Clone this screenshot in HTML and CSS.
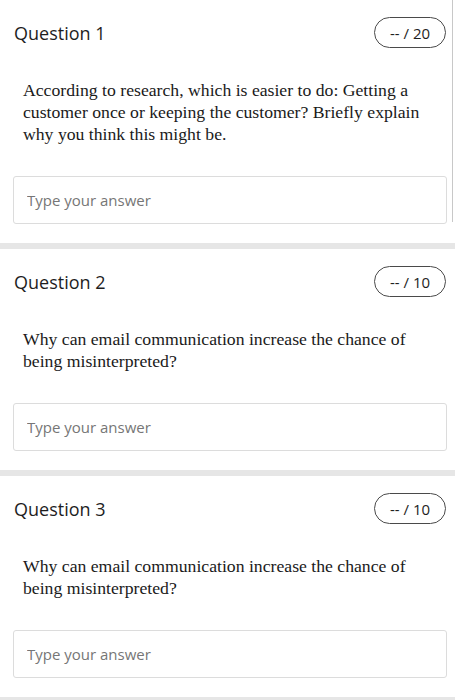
FILE: index.html
```html
<!DOCTYPE html>
<html lang="en">
<head>
    <meta charset="UTF-8">
    <meta name="viewport" content="width=device-width, initial-scale=1.0">
    <title>Quiz</title>
    <link rel="stylesheet" href="styles.css">
</head>
<body>
    <div class="quiz">
        <div class="scroll-edge"></div>

        <div class="question">
            <div class="question-head">
                <h2>Question 1</h2>
                <span class="points">-- / 20</span>
            </div>
            <p class="question-text">According to research, which is easier to do: Getting a customer once or keeping the customer? Briefly explain why you think this might be.</p>
            <input class="answer" type="text" placeholder="Type your answer">
        </div>

        <div class="question">
            <div class="question-head">
                <h2>Question 2</h2>
                <span class="points">-- / 10</span>
            </div>
            <p class="question-text">Why can email communication increase the chance of being misinterpreted?</p>
            <input class="answer" type="text" placeholder="Type your answer">
        </div>

        <div class="question">
            <div class="question-head">
                <h2>Question 3</h2>
                <span class="points">-- / 10</span>
            </div>
            <p class="question-text">Why can email communication increase the chance of being misinterpreted?</p>
            <input class="answer" type="text" placeholder="Type your answer">
        </div>
    </div>
</body>
</html>
```

FILE: styles.css
```css
* {
    margin: 0;
    padding: 0;
    box-sizing: border-box;
}

body {
    background-color: #fff;
    color: #222;
    font-family: "Open Sans", sans-serif;
}

.quiz {
    position: relative;
}

/* thin scrollbar edge on the right */
.scroll-edge {
    position: absolute;
    left: 452px;
    top: 0;
    width: 1px;
    height: 222px;
    background-color: #c8c8c8;
}

.question {
    padding: 17px 8px 19px 13px;
    border-bottom: 6px solid #e6e6e6;
}

.question-head {
    display: flex;
    justify-content: space-between;
    align-items: center;
}

.question-head h2 {
    font-size: 18px;
    font-weight: 400;
    color: #1e1e1e;
    padding-left: 1px;
}

.points {
    display: flex;
    align-items: center;
    justify-content: center;
    width: 72px;
    height: 31px;
    margin-right: 1px;
    border: 1.5px solid #4a4a4a;
    border-radius: 16px;
    font-size: 15px;
    color: #1e1e1e;
}

.question-text {
    margin: 31px 0 31px;
    padding-left: 10px;
    padding-right: 14px;
    font-family: "Liberation Serif", serif;
    font-size: 17.7px;
    line-height: 22px;
    color: #1a1a1a;
}

.answer {
    display: block;
    width: 100%;
    height: 48px;
    padding: 0 13px;
    border: 1px solid #dcdcdc;
    border-radius: 3px;
    font-family: "Open Sans", sans-serif;
    font-size: 15px;
    color: #222;
    background-color: #fff;
}

.answer::placeholder {
    color: #767676;
}
```
